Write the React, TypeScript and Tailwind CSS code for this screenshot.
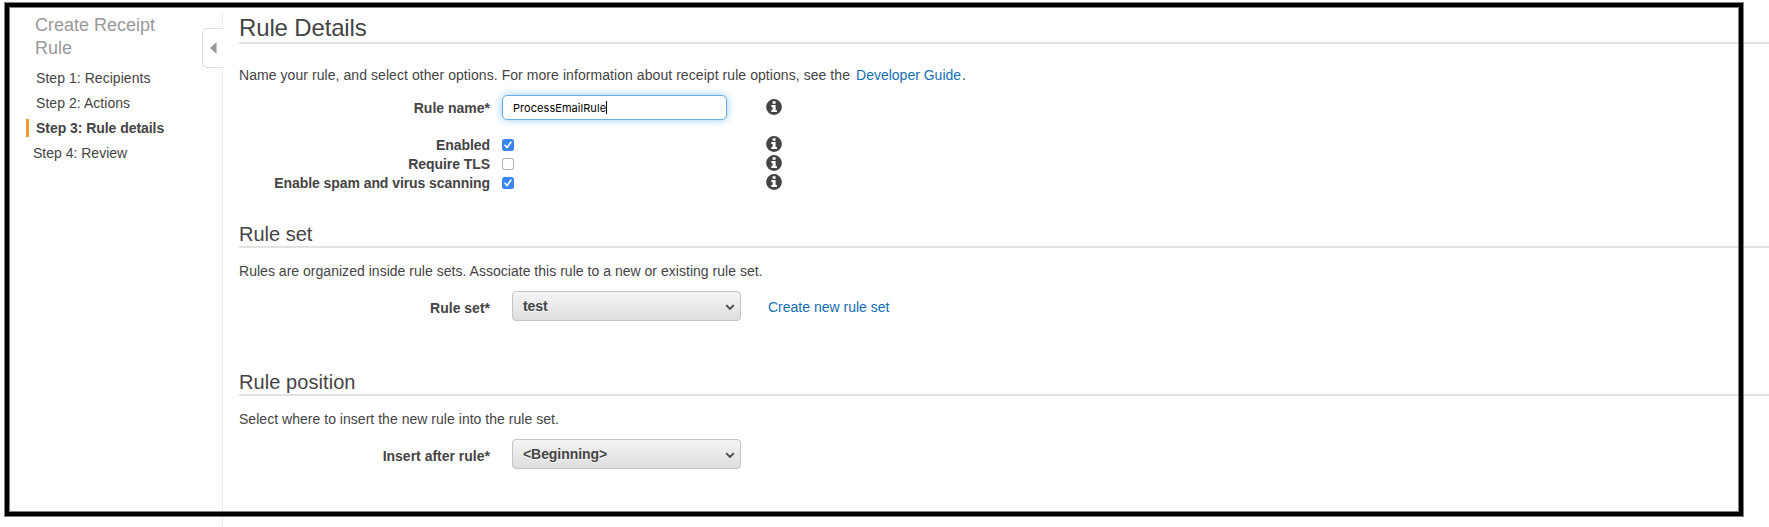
import type { ReactNode } from "react";

function InfoIcon() {
  return (
    <svg className="block size-4" viewBox="0 0 16 16" aria-hidden="true">
      <circle cx="8" cy="8" r="7.9" fill="#444" />
      <path d="M6.6 2.3h3v2.4h-3zM5.3 6.1h4.3v5h1.3v1.8H5.3v-1.8h1.3V7.9H5.3z" fill="#fff" />
    </svg>
  );
}

function Checkbox({ checked }: { checked: boolean }) {
  return checked ? (
    <span className="block size-3 rounded-[2.5px] bg-[#3b86f7]">
      <svg className="block size-3" viewBox="0 0 12 12" aria-hidden="true">
        <path d="M3.1 6.4 5.2 8.6 8.8 3.2" fill="none" stroke="#fff" strokeWidth="1.6" strokeLinecap="round" strokeLinejoin="round" />
      </svg>
    </span>
  ) : (
    <span className="block size-3 rounded-[2.5px] border border-[#b0b0b0] bg-white" />
  );
}

function CheckRow({ label, checked }: { label: string; checked: boolean }) {
  return (
    <div className="flex h-[19px]">
      <div className="w-[251px] text-right font-bold leading-[19px] tracking-[-0.07px]">{label}</div>
      <div className="ml-3 w-[264px] pt-[3px]">
        <Checkbox checked={checked} />
      </div>
      <InfoIcon />
    </div>
  );
}

function SelectBox({ value }: { value: string }) {
  return (
    <div className="flex h-[30px] w-[229px] items-center justify-between rounded-[4px] border border-[#c3c3c3] bg-linear-to-b from-[#f5f5f5] to-[#dedede] pl-2.5 pr-[5px]">
      <span className="-mt-px font-bold leading-5 tracking-[-0.07px] [text-shadow:0_1px_0_#fff]">{value}</span>
      <svg className="mt-[2px] block h-[7px] w-[10px]" viewBox="0 0 10 7" aria-hidden="true">
        <path d="M1.2 1.2 5 5 8.8 1.2" fill="none" stroke="#4a4a4a" strokeWidth="1.9" />
      </svg>
    </div>
  );
}

function SelectRow({ label, value, children }: { label: string; value: string; children?: ReactNode }) {
  return (
    <div className="flex h-[30px]">
      <div className="w-[251px] pt-[7px] text-right font-bold leading-5">{label}</div>
      <div className="ml-[22px]">
        <SelectBox value={value} />
      </div>
      {children}
    </div>
  );
}

function Step({ children, last }: { children: ReactNode; last?: boolean }) {
  return <li className={last ? "h-[25px] pl-[33px]" : "h-[25px] pl-[36px] tracking-[0.05px]"}>{children}</li>;
}

export default function App() {
  return (
    <div className="relative flex h-[527px] w-[1769px] overflow-hidden bg-white text-[14px] text-[#444] [font-family:'Liberation_Sans',Arial,sans-serif]">
      <nav className="flex w-[223px] shrink-0 pt-[13px]">
        <div className="w-[202px]">
          <h2 className="mt-px w-[160px] pl-[35px] text-[18px] leading-[23px] text-[#999]">Create Receipt Rule</h2>
          <ol className="mt-2 leading-5">
            <Step>Step 1: Recipients</Step>
            <Step>Step 2: Actions</Step>
            <li className="flex h-[25px] pl-[26px] font-bold tracking-[-0.05px]">
              <span className="mr-[7px] mt-px h-[18px] w-[3px] bg-[#f79b2e]" />
              Step 3: Rule details
            </li>
            <Step last>Step 4: Review</Step>
          </ol>
        </div>
        <div className="flex h-full w-[21px] flex-col">
          <div className="h-[15px] border-r border-[#ececec]" />
          <div className="flex h-10 items-center rounded-l-[5px] border border-r-0 border-[#dedede] pl-[7px]">
            <svg className="block h-3 w-[7px]" viewBox="0 0 7 12" aria-hidden="true">
              <path d="M6.5 0v12L0 6z" fill="#999" />
            </svg>
          </div>
          <div className="grow border-r border-[#ececec]" />
        </div>
      </nav>

      <main className="ml-4 grow">
        <h1 className="h-[44px] border-b-2 border-[#e2e2e2] pt-[14px] text-[24px] leading-[28px] tracking-[-0.15px]">Rule Details</h1>
        <p className="mt-[21px] flex h-[30px] whitespace-pre leading-5">
          <span className="tracking-[0.065px]">Name your rule, and select other options. For more information about receipt rule options, see the</span>
          <a className="ml-[6px] text-[#146eb4]">Developer Guide</a>
          <span className="ml-px">.</span>
        </p>
        <div className="flex h-[41px]">
          <div className="w-[251px] pt-[3px] text-right font-bold leading-5">Rule name*</div>
          <div className="ml-3 flex h-[25px] w-[225px] items-center rounded-[5px] border border-[#66afe9] bg-white pl-2.5 text-[11px] text-black shadow-[0_0_8px_rgba(82,168,236,0.6)] [font-family:Inter,sans-serif]">
            <span className="mt-0.5 tracking-[0.05px]">ProcessEmailRule</span>
            <span className="h-[13px] w-px bg-black" />
          </div>
          <div className="ml-[39px] pt-1">
            <InfoIcon />
          </div>
        </div>
        <CheckRow label="Enabled" checked />
        <CheckRow label="Require TLS" checked={false} />
        <CheckRow label="Enable spam and virus scanning" checked />

        <h2 className="mt-[29px] h-[26px] border-b-2 border-[#e2e2e2] text-[20px] leading-6">Rule set</h2>
        <p className="mt-[13px] h-[30px] leading-5 tracking-[0.025px]">Rules are organized inside rule sets. Associate this rule to a new or existing rule set.</p>
        <SelectRow label="Rule set*" value="test">
          <a className="ml-[27px] pt-[6px] leading-5 text-[#146eb4]">Create new rule set</a>
        </SelectRow>

        <h2 className="mt-[49px] h-[26px] border-b-2 border-[#e2e2e2] text-[20px] leading-6 tracking-[0.07px]">Rule position</h2>
        <p className="mt-[13px] h-[30px] leading-5 tracking-[0.03px]">Select where to insert the new rule into the rule set.</p>
        <SelectRow label="Insert after rule*" value="<Beginning>" />
      </main>

      <div className="pointer-events-none absolute left-1 top-0.5 h-[515px] w-[1740px] border border-[#808080]">
        <div className="h-full border-4 border-black">
          <div className="h-full border border-[#808080]" />
        </div>
      </div>
    </div>
  );
}
